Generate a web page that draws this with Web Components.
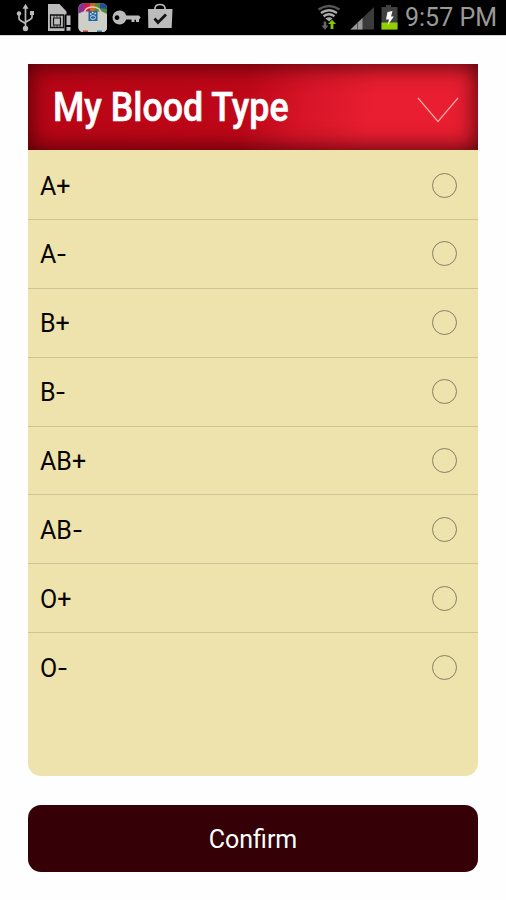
<!DOCTYPE html>
<html lang="en">
<head>
<meta charset="utf-8">
<title>My Blood Type</title>
<style>
html,body{margin:0;height:100%;background:#fefefe;overflow:hidden}
body{font-family:Roboto,"Liberation Sans",sans-serif}
</style>
</head>
<body>
<blood-app></blood-app>
<script>
const define=(name,html)=>customElements.define(name,class extends HTMLElement{
  constructor(){
    super();
    const t=document.createElement('template');
    t.innerHTML=html;
    this.attachShadow({mode:'open'}).appendChild(t.content.cloneNode(true));
  }
});

define('status-bar',`
<style>
:host{display:block;height:36px;background:#000;border-bottom:1px solid #d5d5d5;box-sizing:border-box;flex:none}
.bar{display:flex;height:34px;justify-content:space-between}
svg{display:block;flex:none}
.right{display:flex}
.time{width:101px;font-size:25.5px;line-height:35px;color:#999;white-space:nowrap}
.time span{display:inline-block;transform-origin:0 50%;transform:scaleX(.98)}
</style>
<div class="bar">
<svg width="180" height="34" viewBox="0 0 180 34">
  <!-- USB -->
  <g stroke="#bbb" stroke-width="1.7" fill="none"><path d="M25.5 7v20M19 14v4.200q0 1.500 1.500 2.200l5 3M32 13v4q0 1.500-1.500 2.200l-5 3"/></g>
  <path d="M25.500 3.800l3 5h-6zM30 11h4v4h-4z" fill="#bbb"/><circle cx="19" cy="13.500" r="2.200" fill="#bbb"/><circle cx="25.500" cy="28.500" r="2.700" fill="#bbb"/>
  <!-- SIM card -->
  <path d="M48 4h11.500l7 7.500v3.300h-2V31H48z" fill="#bbb"/>
  <path d="M50.500 15h13v12.500h-13z" fill="#bbb" stroke="#111" stroke-width="1.300"/>
  <path d="M53.500 18h7v7h-7z" fill="#bbb" stroke="#111" stroke-width="1.200"/>
  <path d="M54 15v2.500M57 15v2.500M60 15v2.500M54 25v2.500M57 25v2.500M60 25v2.500" fill="none" stroke="#111" stroke-width=".8"/>
  <path d="M65 14.500h6V31h-6z" fill="#000"/><path d="M66.500 15.500h4v9.500h-4zM66.500 27h4v3.700h-4z" fill="#bbb"/>
  <!-- App store bag -->
  <clipPath id="c"><rect x="78.500" y="3.500" width="28.500" height="28.500" rx="4.500"/></clipPath>
  <g clip-path="url(#c)">
    <path d="M78 3h30v30H78z" fill="#cfcfca"/>
    <path d="M78 3h9l-2 10h-7z" fill="#8b2f93"/><path d="M84 3h9v9h-9z" fill="#c91d52"/><path d="M90 3h8v9h-8z" fill="#d76b15"/><path d="M95 3h7v9h-7z" fill="#508936"/><path d="M100 3h8v8h-8z" fill="#204e9c"/><path d="M99 8l9 1v6h-6z" fill="#4a8c3f"/>
    <path d="M78 14l5-2.500h19l6 3V33H78z" fill="#cfcfca"/>
    <path d="M84 15q0-8 8.500-8t9 8" fill="none" stroke="#dfc8bb" stroke-width="1.700"/>
    <path d="M88.500 11h9v10h-9z" fill="#23659f"/>
    <ellipse cx="93" cy="17.500" rx="2.500" ry="1.900" fill="none" stroke="#c9dce8"/><path d="M90 14h1.500M92 12.500h1.500M94.500 13.500h1.500" stroke="#dce8ef" stroke-width="1.500"/>
    <path d="M83 30.500h5v2h-5z" fill="#b64332"/><path d="M97 30.500h5v2h-5z" fill="#377aaa"/>
  </g>
  <!-- Key -->
  <path fill="#bbb" fill-rule="evenodd" d="M119.500 10.500a7 7 0 0 1 6.700 5H139l1.700 2-1.700 2v2.500h-3v-2.300h-1.500V22h-3v-2.500h-5.300a7 7 0 1 1-6.700-9zM117 15.200a2.400 2.400 0 1 0 .01 0z"/>
  <!-- Shopping bag with tick -->
  <path d="M155 9.500V8q.5-3.500 5-3.500t5 3.500v1.500" fill="none" stroke="#bbb" stroke-width="1.700"/>
  <path d="M148 9h24.500l-.8 19h-23.400z" fill="#bbb"/><path d="M154.500 18.500l3.500 4 8-8" fill="none" stroke="#111" stroke-width="2.800"/>
</svg>
<div class="right">
<svg width="95" height="34" viewBox="310 0 95 34">
  <g fill="none" stroke-width="2.300"><path d="M318.500 9.500q10.500-7 21 0" stroke="#555"/><path d="M321 13q8-5.500 16 0" stroke="#aaa"/><path d="M323.500 16.200q5.500-4 11 0" stroke="#aaa"/></g>
  <path d="M325.500 18.500q3.500-2.500 7 0l-3.500 3z" fill="#aaa"/>
  <path d="M323.700 21.500h2.600v4h2.200l-3.500 4.200-3.500-4.200h2.200z" fill="#666"/><path d="M332 19.700l4 4.300h-2.600v5h-2.800v-5H328z" fill="#83c900"/>
  <path d="M374 7v22.500h-23.500z" fill="#3b3b3b"/><path d="M362.500 18v11.500h-12z" fill="#999"/><path d="M357.500 22v8" stroke="#444" stroke-width=".8"/>
  <path d="M386 5h5v2h6.500v22.500h-16V7h4.500z" fill="#414141"/><path d="M381.500 22.500h16v7h-16z" fill="#91cf00"/>
  <path d="M387.500 12l5-1-1.500 5.500h2.800l-6.300 9 1.500-6h-3z" fill="#fff"/>
</svg>
<div class="time"><span>9:57 PM</span></div>
</div></div>`);

define('panel-header',`
<style>
:host{display:flex;align-items:center;justify-content:space-between;height:86px;box-sizing:border-box;padding:0 19px 0 25px;
background:linear-gradient(100deg,#b90516 0%,#be0718 48%,#d71428 61%,#e91e31 76%,#e91e31 100%);
box-shadow:inset 0 0 22px 2px rgba(65,0,5,.9);flex:none}
.title{color:#fff;font-weight:500;-webkit-text-stroke:.6px #fff;font-size:40px;line-height:88px;padding-top:2px;white-space:nowrap;transform-origin:0 50%;transform:scaleX(.895)}
svg{display:block;margin-top:4px}
</style>
<div class="title"><slot></slot></div>
<svg width="42" height="28" viewBox="0 0 42 28"><path d="M1 3l20 23.500L41 3" fill="none" stroke="#ffa6a9" stroke-width="1.200"/></svg>`);

define('blood-option',`
<style>
:host{display:flex;justify-content:space-between;align-items:center;height:68.860px;box-sizing:border-box;padding:0 21px 0 12px;border-bottom:1px solid #cfc497;color:#080604;font-size:25px}
:host(:last-child){border-bottom-color:transparent}
.label{padding-top:2px}
::slotted(b){display:inline-block;font-weight:400;transform:scaleX(1.3);transform-origin:0 50%;margin-left:.8px}
i{width:25px;height:25px;border:1.300px solid #858063;border-radius:50%;box-sizing:border-box}
</style><div class="label"><slot></slot></div><i></i>`);

define('confirm-button',`
<style>
:host{display:block;height:67px;margin-top:29px;flex:none}
button{display:block;width:100%;height:100%;border:0;padding:2px 0 0;border-radius:13px;background:#350006;color:#fff;font:25px Roboto,"Liberation Sans",sans-serif}
</style><button><slot></slot></button>`);

define('blood-app',`
<style>
:host{display:flex;flex-direction:column;height:900px}
main{display:flex;flex-direction:column;padding:28px 28px 0}
.list{height:626px;background:#eee2ad;border-radius:0 0 13px 13px;padding-top:1.2px;box-sizing:border-box}
</style>
<status-bar></status-bar>
<main>
<panel-header>My Blood Type</panel-header>
<div class="list">
<blood-option>A+</blood-option><blood-option>A<b>-</b></blood-option><blood-option>B+</blood-option><blood-option>B<b>-</b></blood-option>
<blood-option>AB+</blood-option><blood-option>AB<b>-</b></blood-option><blood-option>O+</blood-option><blood-option>O<b>-</b></blood-option>
</div>
<confirm-button>Confirm</confirm-button>
</main>`);
</script>
</body>
</html>
